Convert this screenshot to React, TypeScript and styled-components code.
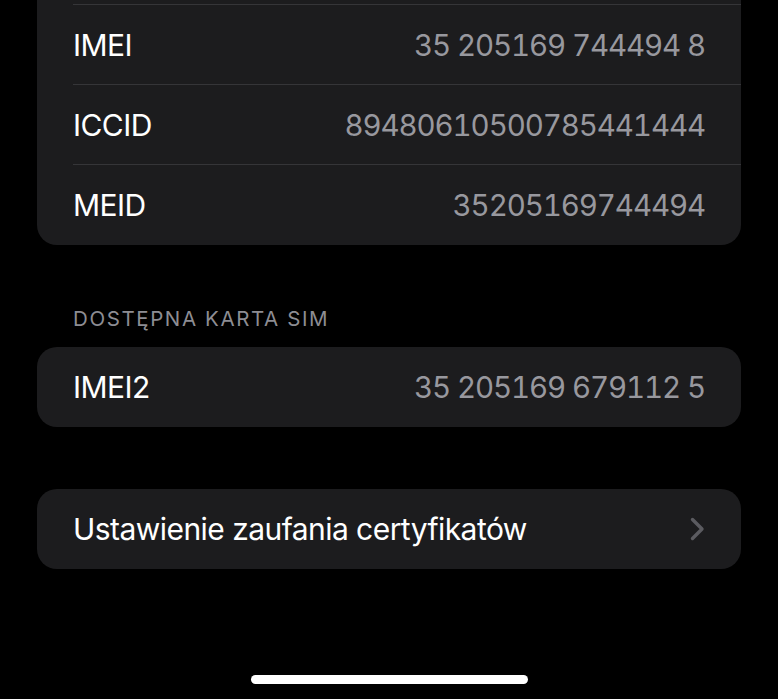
import React from 'react';
import styled, { createGlobalStyle } from 'styled-components';

const GlobalStyle = createGlobalStyle`
    html, body {
        margin: 0;
        padding: 0;
        background: #000;
    }
    body {
        font-family: Inter, "Noto Sans", "Liberation Sans", sans-serif;
        -webkit-font-smoothing: antialiased;
        overflow: hidden;
    }
`;

const Screen = styled.div`
    width: 778px;
    height: 699px;
    background: #000;
    overflow: hidden;
    display: flex;
    flex-direction: column;
`;

// the list is scrolled: the row above IMEI is cut off at the top
const Scroller = styled.div`
    display: flex;
    flex-direction: column;
    margin-top: -75px;
    padding: 0 37px;
`;

const Card = styled.div<{ $gapTop?: number }>`
    background: #1c1c1e;
    border-radius: 20px;
    overflow: hidden;
    margin-top: ${({ $gapTop }) => $gapTop ?? 0}px;
`;

const Row = styled.div<{ $divider?: boolean }>`
    position: relative;
    height: 80px;
    display: flex;
    align-items: center;
    justify-content: space-between;
    padding: 0 36px;
    box-sizing: border-box;

    ${({ $divider }) =>
        $divider &&
        `
        &::after {
            content: '';
            position: absolute;
            left: 36px;
            right: 0;
            bottom: 0;
            height: 1px;
            background: #353538;
        }
    `}
`;

const Label = styled.span`
    font-size: 30px;
    color: #ffffff;
    letter-spacing: -0.55px;
`;

const Value = styled.span`
    font-size: 29.5px;
    color: #98989e;
    font-feature-settings: 'tnum' 1;
    font-variant-numeric: tabular-nums;
    letter-spacing: -1.1px;
`;

const SectionHeader = styled.div`
    padding: 62px 36px 16px;
    font-size: 20.5px;
    line-height: 24px;
    color: #8d8d93;
    letter-spacing: 1.6px;
    text-transform: uppercase;
`;

const Chevron = styled.svg`
    width: 15px;
    height: 24px;
    flex-shrink: 0;
`;

const HomeBar = styled.div`
    align-self: center;
    width: 277px;
    height: 9px;
    border-radius: 5px;
    background: #ffffff;
    margin-top: 106px;
`;

const deviceRows = [
    { label: '', value: '' },
    { label: 'IMEI', value: '35 205169 744494 8' },
    { label: 'ICCID', value: '89480610500785441444' },
    { label: 'MEID', value: '35205169744494' },
];

export default function App() {
    return (
        <Screen>
            <GlobalStyle />
            <Scroller>
                <Card>
                    {deviceRows.map((row, i) => (
                        <Row key={i} $divider={i < deviceRows.length - 1}>
                            <Label>{row.label}</Label>
                            <Value>{row.value}</Value>
                        </Row>
                    ))}
                </Card>

                <SectionHeader>Dostępna karta SIM</SectionHeader>
                <Card>
                    <Row>
                        <Label>IMEI2</Label>
                        <Value>35 205169 679112 5</Value>
                    </Row>
                </Card>

                <Card $gapTop={62}>
                    <Row>
                        <Label>Ustawienie zaufania certyfikatów</Label>
                        <Chevron viewBox="0 0 15 24">
                            <polyline
                                points="2.5,2.5 12,12 2.5,21.5"
                                fill="none"
                                stroke="#5b5b60"
                                strokeWidth="3.4"
                                strokeLinecap="round"
                                strokeLinejoin="round"
                            />
                        </Chevron>
                    </Row>
                </Card>

                <HomeBar />
            </Scroller>
        </Screen>
    );
}
